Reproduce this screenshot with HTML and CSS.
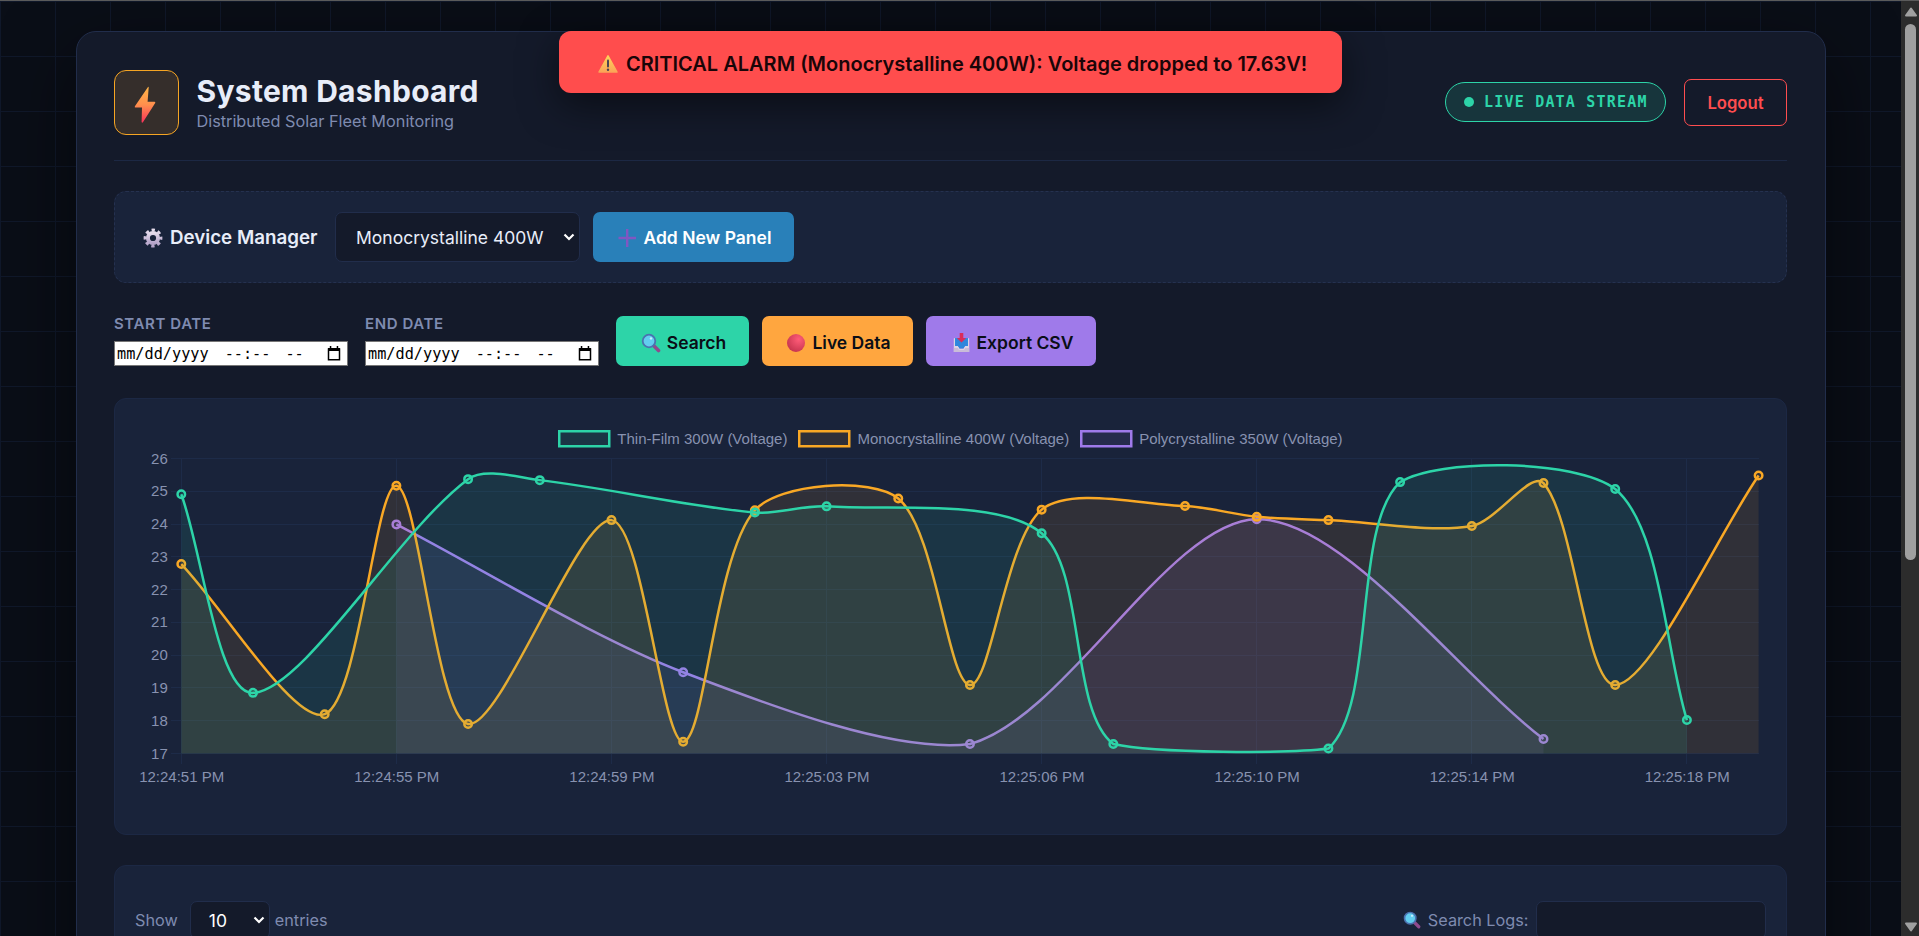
FILE: index.html
```html
<!DOCTYPE html>
<html lang="en">
<head>
<meta charset="UTF-8">
<title>System Dashboard</title>
<link rel="stylesheet" href="styles.css">
</head>
<body>
<svg class="defs" width="0" height="0">
    <defs>
        <linearGradient id="bolt" x1="0" y1="0" x2="0" y2="1">
            <stop offset="0" stop-color="#ffb547"/>
            <stop offset=".5" stop-color="#ff8f4d"/>
            <stop offset="1" stop-color="#f8315a"/>
        </linearGradient>
        <linearGradient id="gear" x1="0" y1="0" x2="0" y2="1">
            <stop offset="0" stop-color="#e6dcec"/>
            <stop offset="1" stop-color="#b3a2c8"/>
        </linearGradient>
        <radialGradient id="ball" cx=".65" cy=".3" r=".8">
            <stop offset="0" stop-color="#ff5c78"/>
            <stop offset="1" stop-color="#c2314c"/>
        </radialGradient>
        <linearGradient id="warn" x1="0" y1="0" x2="0" y2="1">
            <stop offset="0" stop-color="#fdd45c"/>
            <stop offset="1" stop-color="#fba457"/>
        </linearGradient>
        <symbol id="search-icon" viewBox="0 0 20 20">
            <path d="M12.5 12.5l5 5" stroke="#8f4a8e" stroke-width="3.6" stroke-linecap="round"/>
            <circle cx="8" cy="8" r="6.3" fill="#62cdef" stroke="#4a72b0" stroke-width="1.8"/>
            <circle cx="10" cy="5.4" r="1.2" fill="#c8f0ff"/>
        </symbol>
        <symbol id="calendar" viewBox="0 0 14 15">
            <path d="M1.500 3h11v10.800h-11z" fill="none" stroke="#000" stroke-width="1.500"/>
            <path d="M1 2h12v3H1zM2.800 0h1.500v3H2.800zM9.700 0h1.500v3H9.700z"/>
        </symbol>
    </defs>
</svg>

<div class="window">
    <div class="page">
        <div class="container">
            <div class="header">
                <div class="brand">
                    <div class="logo">
                        <svg width="22" height="38" viewBox="0 0 22 38"><path d="M14 1L.9 20.300Q.3 21.500 1.500 21.500H8L7.600 36q.5 1.500 1.500 0L21.200 17q.5-1.300-.8-1.300H13.600L14.700 1.200q-.2-.9-.7-.2z" fill="url(#bolt)"/></svg>
                    </div>
                    <div class="brand-text">
                        <h1>System Dashboard</h1>
                        <p>Distributed Solar Fleet Monitoring</p>
                    </div>
                </div>
                <div class="header-right">
                    <div class="live-badge"><span class="dot"></span><span>LIVE DATA STREAM</span></div>
                    <div class="logout">Logout</div>
                </div>
            </div>

            <div class="device-manager">
                <div class="dm-title">
                    <svg width="20" height="20" viewBox="0 0 20 20"><g fill="none" stroke="url(#gear)"><circle cx="10" cy="10" r="5.1" stroke-width="4"/><circle cx="10" cy="10" r="7.9" stroke-width="3" stroke-dasharray="3.3 2.905" stroke-dashoffset="1.650"/></g></svg>
                    <span>Device Manager</span>
                </div>
                <div class="select device-select"><span>Monocrystalline 400W</span><svg width="12" height="8" viewBox="0 0 12 8"><path d="M1.500 1.500L6 6l4.500-4.500" fill="none" stroke="#fff" stroke-width="2.200"/></svg></div>
                <div class="btn btn-add">
                    <svg width="20" height="20" viewBox="0 0 20 20"><path d="M9 1h2.400v7.800H19v2.400h-7.600V19H9v-7.800H1.500V8.800H9z" fill="#8057c2"/></svg>
                    <span>Add New Panel</span>
                </div>
            </div>

            <div class="filters">
                <div class="field">
                    <label>START DATE</label>
                    <div class="date-input"><span>mm/dd/yyyy</span><span class="time">--:--</span><span class="ampm">--</span><svg width="14" height="15"><use href="#calendar"/></svg></div>
                </div>
                <div class="field">
                    <label>END DATE</label>
                    <div class="date-input"><span>mm/dd/yyyy</span><span class="time">--:--</span><span class="ampm">--</span><svg width="14" height="15"><use href="#calendar"/></svg></div>
                </div>
                <div class="buttons">
                    <div class="btn btn-search"><svg width="20" height="20"><use href="#search-icon"/></svg><span>Search</span></div>
                    <div class="btn btn-live"><svg width="20" height="20" viewBox="0 0 20 20"><circle cx="10" cy="10" r="9" fill="url(#ball)"/></svg><span>Live Data</span></div>
                    <div class="btn btn-export">
                        <svg width="20" height="20" viewBox="0 0 20 20"><path d="M4 5h13v9H4z" fill="#2f8ee0"/><path d="M4 5v8h3l1.500 2.500h4l1.500-2.500h3V5l1.200.5V19H2.800V5.500z" fill="#dcd3e6"/><path d="M2.800 15h4l1.200 2h5l1.200-2h4v4H2.800z" fill="#c9bcd8"/><path d="M4.700 6h11.600v7h-2.500l-1.300 2.500h-4L7.200 13H4.700z" fill="#2f86dc"/><path d="M8.700 0h3.600v5h2.900L10.500 9.500 5.800 5h2.900z" fill="#d92c5a"/></svg>
                        <span>Export CSV</span>
                    </div>
                </div>
            </div>

            <div class="card chart-card">
                <div class="legend">
                    <div class="legend-item"><svg width="54" height="18"><rect class="thin" x="1.250" y="1.250" width="50" height="15"/></svg>Thin-Film 300W (Voltage)</div>
                    <div class="legend-item"><svg width="54" height="18"><rect class="mono" x="1.250" y="1.250" width="50" height="15"/></svg>Monocrystalline 400W (Voltage)</div>
                    <div class="legend-item"><svg width="54" height="18"><rect class="poly" x="1.250" y="1.250" width="50" height="15"/></svg>Polycrystalline 350W (Voltage)</div>
                </div>
                <svg id="chart" width="1671" height="340"></svg>
            </div>

            <div class="card table-card">
                <div class="entries">
                    <span>Show</span>
                    <div class="select entries-select"><span>10</span><svg width="12" height="8" viewBox="0 0 12 8"><path d="M1.500 1.500L6 6l4.500-4.500" fill="none" stroke="#fff" stroke-width="2.200"/></svg></div>
                    <span>entries</span>
                </div>
                <div class="search-logs">
                    <svg width="18" height="18"><use href="#search-icon"/></svg>
                    <span>Search Logs:</span>
                    <div class="search-input"></div>
                </div>
            </div>
        </div>
    </div>
    <div class="scrollbar">
        <svg width="14" height="10" viewBox="0 0 14 10"><path d="M7 1.500L12 8.500H2z" fill="#a0a0a0" stroke="#a0a0a0" stroke-width="2" stroke-linejoin="round"/></svg>
        <div class="thumb"></div>
        <svg class="down" width="14" height="10" viewBox="0 0 14 10"><path d="M7 8.500L12 1.500H2z" fill="#a0a0a0" stroke="#a0a0a0" stroke-width="2" stroke-linejoin="round"/></svg>
    </div>
    <div class="alarm">
        <svg width="22" height="22" viewBox="0 0 22 22"><path d="M11 2.800L20 19H2z" fill="url(#warn)" stroke="url(#warn)" stroke-width="1.500" stroke-linejoin="round"/><path d="M11 7.500v6" stroke="#4b4453" stroke-width="2" stroke-linecap="round"/><circle cx="11" cy="16.800" r="1.200" fill="#4b4453"/></svg>
        <span>CRITICAL ALARM (Monocrystalline 400W): Voltage dropped to 17.63V!</span>
    </div>
</div>
<script src="chart.js"></script>
</body>
</html>
```
FILE: styles.css
```css
* {
    box-sizing: border-box;
}

body {
    margin: 0;
    background: #0a0e17;
    font-family: "Inter", sans-serif;
    color: #e8edf9;
}

.defs {
    position: absolute;
}

.window {
    position: relative;
    display: flex;
    height: 936px;
    overflow: hidden;
    border-top: 1px solid #5b5b5b;
}

.page {
    flex: 1;
    padding-top: 30px;
    background-color: #0a0e17;
    background-image:
        linear-gradient(#10182a 1px, transparent 1px),
        linear-gradient(90deg, #10182a 1px, transparent 1px);
    background-size: 55px 55px;
}

.container {
    width: 1750px;
    height: 1500px;
    margin: 0 auto;
    padding: 38px 37.5px;
    background: #141a2a;
    border: 1px solid #212d4b;
    border-radius: 20px;
    box-shadow: 0 25px 75px rgba(0, 0, 0, .5);
}

.header {
    display: flex;
    justify-content: space-between;
    align-items: center;
    height: 91px;
    padding-bottom: 25px;
    border-bottom: 1px solid #1c2844;
}

.brand {
    display: flex;
    gap: 17.5px;
}

.logo {
    display: flex;
    align-items: center;
    justify-content: center;
    width: 65px;
    height: 65px;
    padding-top: 5px;
    padding-right: 3px;
    background: #352e2b;
    border: 1px solid #f6a523;
    border-radius: 12px;
}

.brand-text h1 {
    margin: 3px 0 0;
    font-size: 30px;
    line-height: 36px;
    font-weight: 700;
    letter-spacing: .3px;
}

.brand-text p {
    margin: 2px 0 0;
    font-size: 16.25px;
    line-height: 20px;
    color: #7f8bb0;
}

.header-right {
    display: flex;
    align-items: center;
    gap: 18px;
    margin-top: -1px;
}

.live-badge {
    display: flex;
    align-items: center;
    gap: 10px;
    width: 221px;
    height: 40px;
    padding-left: 18px;
    background: #17353c;
    border: 1px solid #2dd4a8;
    border-radius: 20px;
    color: #2dd4a8;
    font: bold 15px "DejaVu Sans Mono", monospace;
    letter-spacing: 1.2px;
    white-space: nowrap;
}

.dot {
    width: 10px;
    height: 10px;
    border-radius: 50%;
    background: #2dd4a8;
}

.logout {
    width: 103px;
    height: 47px;
    border: 1px solid #ff4d4f;
    border-radius: 7px;
    color: #ff4d4f;
    font-size: 16.67px;
    font-weight: 600;
    line-height: 46px;
    text-align: center;
}

.device-manager {
    display: flex;
    align-items: center;
    height: 92px;
    margin-top: 30px;
    padding-left: 28px;
    background: #19233a;
    border: 1px dashed #25314f;
    border-radius: 12px;
}

.dm-title {
    display: flex;
    align-items: center;
    gap: 7px;
    width: 192px;
    padding-top: 1px;
    font-size: 18.75px;
    font-weight: 600;
    white-space: nowrap;
}

.select {
    display: flex;
    align-items: center;
    justify-content: space-between;
    height: 50px;
    padding: 0 4px 0 20px;
    background: #141a2a;
    border: 1px solid #212d4b;
    border-radius: 7px;
    font-size: 17.5px;
}

.device-select {
    width: 245px;
    margin-right: 13px;
}

.btn {
    display: flex;
    align-items: center;
    justify-content: center;
    gap: 6px;
    height: 50px;
    padding-top: 1px;
    padding-left: 2px;
    border-radius: 7px;
    color: #0a0e17;
    font-size: 17.5px;
    font-weight: 600;
    white-space: nowrap;
}

.btn-add {
    width: 201px;
    background: #2980b9;
    color: #fff;
}

.filters {
    display: flex;
    gap: 17.5px;
    margin-top: 33px;
    height: 50px;
}

.field label {
    display: block;
    height: 25px;
    font-size: 15px;
    font-weight: 600;
    line-height: 16px;
    letter-spacing: .6px;
    color: #7f8bb0;
}

.date-input {
    display: flex;
    align-items: center;
    width: 233.5px;
    height: 25px;
    padding: 0 6px 0 2px;
    background: #fff;
    border: 1px solid #767676;
    color: #000;
    font: 15.23px "DejaVu Sans Mono", monospace;
}

.date-input .time {
    margin-left: 16px;
}

.date-input .ampm {
    margin-left: 15px;
    margin-right: auto;
}

.buttons {
    display: flex;
    gap: 13px;
}

.buttons .btn {
    padding-top: 3px;
}

.btn-search {
    width: 133px;
    background: #2dd4a8;
}

.btn-live {
    width: 151px;
    background: #ffa63f;
}

.btn-export {
    width: 170px;
    background: #9f7aea;
}

.card {
    background: #19233a;
    border: 1px solid #1c2844;
    border-radius: 12px;
}

.chart-card {
    height: 437px;
    margin-top: 32px;
}

.legend {
    display: flex;
    justify-content: center;
    gap: 11px;
    height: 50px;
    padding-top: 31px;
}

.legend-item {
    display: flex;
    gap: 5px;
    font: 15px "Liberation Sans", Arial, sans-serif;
    line-height: 18px;
    color: #8892b0;
}

.thin {
    fill: rgba(45, 212, 168, .1);
    stroke: #2dd4a8;
}

.mono {
    fill: rgba(255, 166, 35, .1);
    stroke: #f9a825;
}

.poly {
    fill: rgba(159, 122, 234, .1);
    stroke: #9f7aea;
}

rect, .line, .point {
    stroke-width: 2.5;
}

.area {
    stroke: none;
}

path.line {
    fill: none;
}

#chart {
    display: block;
}

#chart text {
    font: 15px "Liberation Sans", Arial, sans-serif;
    fill: #8892b0;
}

.grid {
    stroke: #1d2b48;
    stroke-width: 1;
    shape-rendering: crispEdges;
}

.table-card {
    display: flex;
    justify-content: space-between;
    height: 500px;
    margin-top: 30px;
    padding: 35px 20px 0;
    color: #7f8bb0;
    font-size: 16.25px;
}

.entries, .search-logs {
    display: flex;
    align-items: center;
    height: 38px;
}

.entries-select {
    align-self: flex-start;
    width: 80px;
    height: 38px;
    margin: 0 5px 0 12px;
    padding-left: 18px;
    color: #fff;
}

.search-logs span {
    margin: 0 7.5px 0 7px;
}

.search-input {
    align-self: flex-start;
    width: 230px;
    height: 38px;
    background: #141a2a;
    border: 1px solid #212d4b;
    border-radius: 7px;
}

.scrollbar {
    display: flex;
    flex-direction: column;
    align-items: center;
    width: 18px;
    padding: 6px 0 4px 1px;
    background: #2c2c2c;
}

.thumb {
    width: 11px;
    height: 536px;
    margin-top: 7px;
    border-radius: 6px;
    background: #9f9f9f;
}

.down {
    margin-top: auto;
}

.alarm {
    position: absolute;
    top: 30px;
    left: 559px;
    display: flex;
    align-items: center;
    gap: 7px;
    width: 783px;
    height: 62px;
    padding-top: 3px;
    padding-left: 38px;
    background: #ff4d4d;
    border-radius: 12px;
    box-shadow: 0 12px 38px rgba(0, 0, 0, .5);
    color: #1a0508;
    font-size: 20px;
    font-weight: 600;
    white-space: nowrap;
}
```
FILE: chart.js
```javascript
var chart = document.getElementById('chart');
var left = 66.3, right = 1643.6, top0 = 9.5, bottom = 304.5;
var tension = 0.3;

// [label index, voltage]
var series = [
    { name: 'poly', data: [[3, 23.99], [7, 19.48], [11, 17.29], [15, 24.15], [19, 17.44]] },
    { name: 'mono', data: [[0, 22.78], [2, 18.2], [3, 25.17], [4, 17.9], [6, 24.12], [7, 17.36], [8, 24.42], [10, 24.78], [11, 19.09], [12, 24.44], [14, 24.55], [15, 24.22], [16, 24.12], [18, 23.94], [19, 25.25], [20, 19.09], [22, 25.48]] },
    { name: 'thin', data: [[0, 24.91], [1, 18.85], [4, 25.37], [5, 25.34], [8, 24.35], [9, 24.54], [12, 23.72], [13, 17.29], [16, 17.15], [17, 25.28], [20, 25.07], [21, 18.02]] }
];
var labels = ['12:24:51 PM', '12:24:55 PM', '12:24:59 PM', '12:25:03 PM', '12:25:06 PM', '12:25:10 PM', '12:25:14 PM', '12:25:18 PM'];

function add(tag, attrs, text) {
    var el = document.createElementNS('http://www.w3.org/2000/svg', tag);
    for (var k in attrs) el.setAttribute(k, attrs[k]);
    if (text) el.textContent = text;
    chart.appendChild(el);
}

function xPos(i) { return left + (right - left) * i / 22; }
function yPos(v) { return top0 + (26 - v) * (bottom - top0) / 9; }
function clampY(y) { return Math.max(top0, Math.min(bottom, y)); }

function controls(p, c, n) {
    var a = Math.hypot(c.x - p.x, c.y - p.y);
    var b = Math.hypot(n.x - c.x, n.y - c.y);
    var fa = tension * a / (a + b), fb = tension * b / (a + b);
    return {
        x1: c.x - fa * (n.x - p.x), y1: clampY(c.y - fa * (n.y - p.y)),
        x2: c.x + fb * (n.x - p.x), y2: clampY(c.y + fb * (n.y - p.y))
    };
}

for (var v = 17; v <= 26; v++) {
    var y = Math.floor(yPos(v)) + 0.5;
    add('line', { 'class': 'grid', x1: left - 10, x2: right, y1: y, y2: y });
    add('text', { x: left - 13.5, y: yPos(v) + 5, 'text-anchor': 'end' }, String(v));
}

labels.forEach(function(label, i) {
    var x = Math.floor(xPos(i * 3)) + 0.5;
    add('line', { 'class': 'grid', x1: x, x2: x, y1: top0, y2: bottom + 10 });
    add('text', { x: xPos(i * 3) + 0.4, y: bottom + 28, 'text-anchor': 'middle' }, label);
});

series.forEach(function(s) {
    var pts = s.data.map(function(d) { return { x: xPos(d[0]), y: yPos(d[1]) }; });
    var cp = pts.map(function(p, i) {
        return controls(pts[Math.max(i - 1, 0)], p, pts[Math.min(i + 1, pts.length - 1)]);
    });
    var d = 'M' + pts[0].x + ' ' + pts[0].y;
    for (var i = 1; i < pts.length; i++) {
        d += 'C' + [cp[i - 1].x2, cp[i - 1].y2, cp[i].x1, cp[i].y1, pts[i].x, pts[i].y].join(' ');
    }
    add('path', { 'class': s.name + ' area', d: d + 'V' + bottom + 'H' + pts[0].x + 'Z' });
    add('path', { 'class': s.name + ' line', d: d });
    pts.forEach(function(p) {
        add('circle', { 'class': s.name + ' point', cx: p.x, cy: p.y, r: 3.75 });
    });
});
```
